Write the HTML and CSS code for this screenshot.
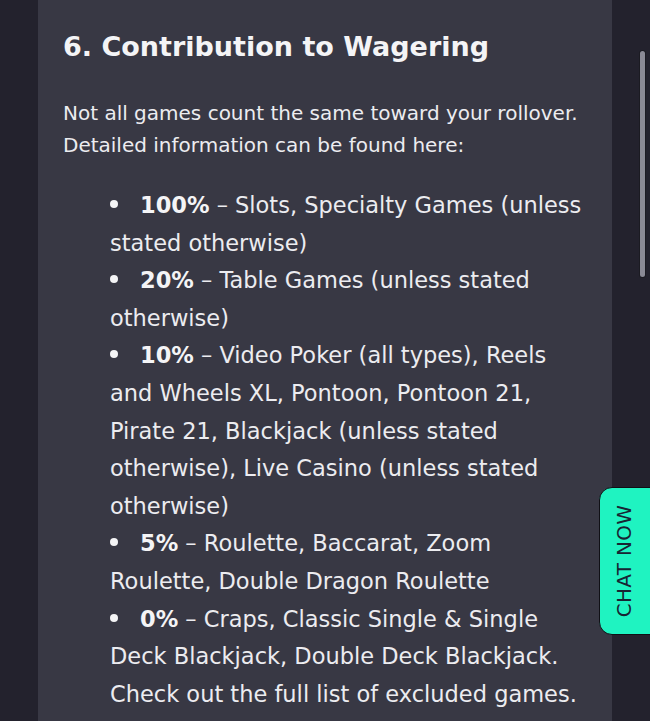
FILE: index.html
```html
<!DOCTYPE html>
<html lang="en">
<head>
<meta charset="utf-8">
<title>Contribution to Wagering</title>
<link rel="stylesheet" href="styles.css">
</head>
<body>
<main class="page">
  <section class="card">
    <h2 class="card-title">6. Contribution to Wagering</h2>
    <p class="card-intro">Not all games count the same toward your rollover. Detailed information can be found here:</p>
    <ul class="rates">
      <li><span class="rate-text"><strong>100%</strong> – Slots, Specialty Games (unless stated otherwise)</span></li>
      <li><span class="rate-text"><strong>20%</strong> – Table Games (unless stated otherwise)</span></li>
      <li><span class="rate-text"><strong>10%</strong> – Video Poker (all types), Reels and Wheels XL, Pontoon, Pontoon 21, Pirate 21, Blackjack (unless stated otherwise), Live Casino (unless stated otherwise)</span></li>
      <li><span class="rate-text"><strong>5%</strong> – Roulette, Baccarat, Zoom Roulette, Double Dragon Roulette</span></li>
      <li><span class="rate-text"><strong>0%</strong> – Craps, Classic Single &amp; Single Deck Blackjack, Double Deck Blackjack. Check out the full list of excluded games.</span></li>
    </ul>
  </section>
</main>
<div class="scroll-thumb"></div>
<button class="chat-now" type="button"><span class="chat-label">CHAT NOW</span></button>
</body>
</html>
```
FILE: styles.css
```css
html, body {
  margin: 0;
  padding: 0;
  height: 100%;
  overflow: hidden;
}

body {
  background: #23222d;
  font-family: "DejaVu Sans", "Noto Sans", sans-serif;
  color: #ececf0;
}

.page {
  display: flex;
  padding-left: 38px;
}

.card {
  width: 574px;
  box-sizing: border-box;
  background: #383844;
  padding: 28px 25px 40px 25px;
  min-height: 900px;
}

.card-title {
  margin: 0;
  font-size: 27px;
  line-height: 37px;
  font-weight: bold;
  color: #f4f4f6;
}

.card-intro {
  margin: 32px 0 0 0;
  font-size: 20px;
  line-height: 32px;
}

.rates {
  list-style: none;
  margin: 26px 0 0 0;
  padding: 0 0 0 47px;
  font-size: 22.5px;
  line-height: 37.6px;
}

.rates li::before {
  content: "";
  display: inline-block;
  width: 8px;
  height: 8px;
  border-radius: 50%;
  background: #f4f4f6;
  margin: 0 22px 0 0;
  vertical-align: 5px;
}

.rates strong {
  font-weight: bold;
  color: #f4f4f6;
}

.scroll-thumb {
  position: fixed;
  left: 640px;
  top: 51px;
  width: 5px;
  height: 226px;
  border-radius: 3px;
  background: #8a8a95;
  box-shadow: 0 0 0 1px #1b1b22;
}

.chat-now {
  position: fixed;
  left: 599px;
  top: 487px;
  width: 60px;
  height: 148px;
  margin: 0;
  padding: 0 10px 0 0;
  box-sizing: border-box;
  background: #1ff3c1;
  border: 1.5px solid #101016;
  border-radius: 13px 0 0 13px;
  display: flex;
  align-items: center;
  justify-content: center;
  cursor: pointer;
}

.chat-label {
  display: block;
  transform: rotate(-90deg);
  white-space: nowrap;
  font-family: "DejaVu Sans", sans-serif;
  font-size: 20px;
  line-height: 20px;
  color: #182433;
  letter-spacing: 0.3px;
}
```
